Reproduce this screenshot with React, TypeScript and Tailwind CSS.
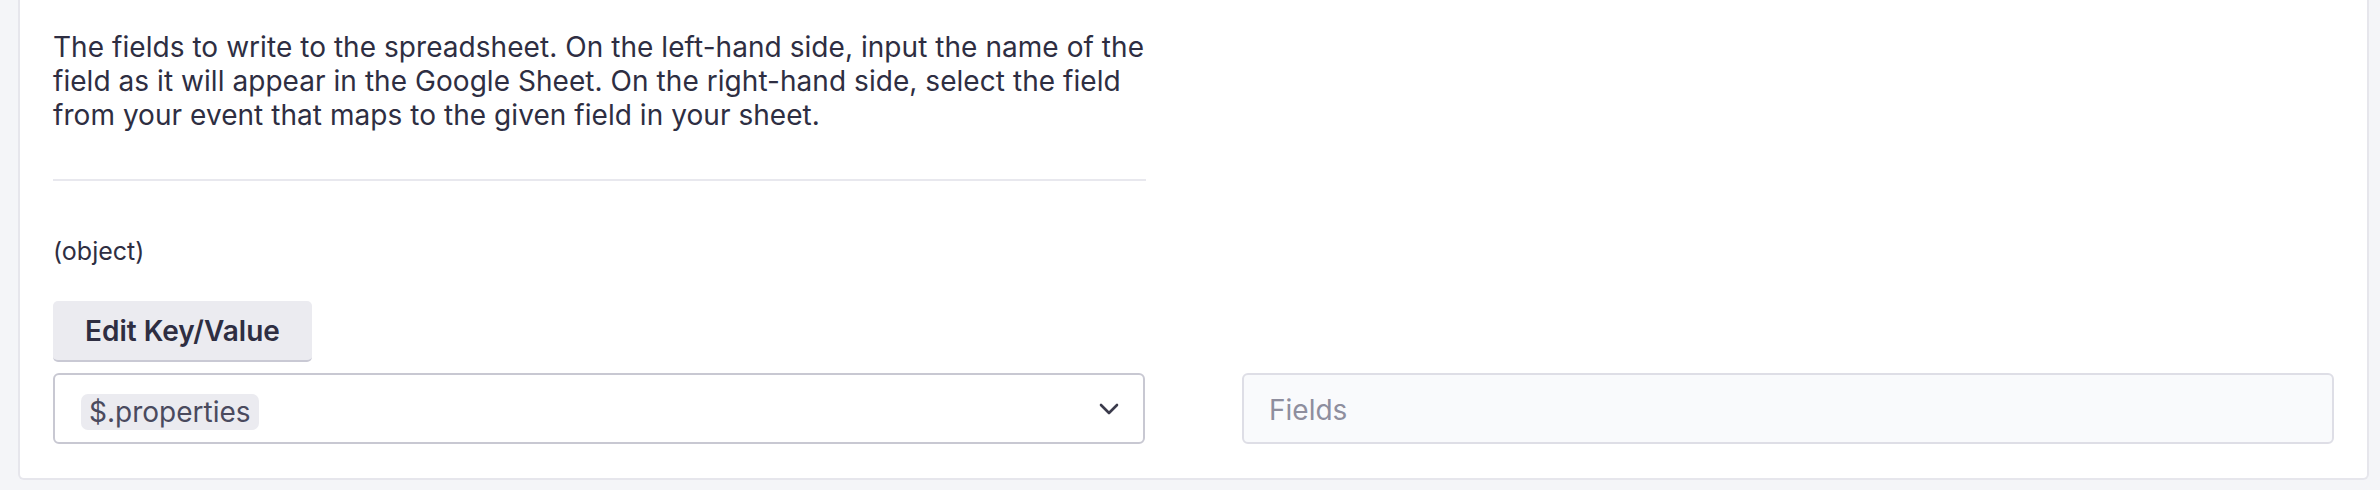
import React from 'react';

const font = { fontFamily: 'Inter, "Noto Sans", sans-serif' };

const Chevron = () => (
  <svg width="20" height="12" viewBox="0 0 20 12" fill="none">
    <path d="M2 2l8 8 8-8" stroke="#3b3b4c" strokeWidth="2.6" strokeLinecap="round" strokeLinejoin="round" />
  </svg>
);

export default function App() {
  return (
    <div className="min-h-[490px] w-full bg-[#f4f5f8] pl-[18px] pr-[11px]" style={font}>
      <div className="rounded-b-[6px] border-x-2 border-b-2 border-[#e6e6ec] bg-white px-[33px] pb-[34px] pt-[30px]">
        <p className="max-w-[1110px] text-[28px] leading-[34px] tracking-[0.05px] text-[#2e2e42]">
          The fields to write to the spreadsheet. On the left-hand side, input the name of the field as it will appear in the Google Sheet. On the right-hand side, select the field from your event that maps to the given field in your sheet.
        </p>
        <div className="mt-[47px] h-[2px] w-[1093px] bg-[#e8e8ee]" />
        <div className="mt-[54px] text-[25px] leading-[32px] text-[#2e2e42]">(object)</div>
        <button className="mt-[34px] flex h-[61px] items-center rounded-[5px] border-b-2 border-[#c9c9d4] bg-[#ebebf0] px-[32px] text-[28px] font-semibold text-[#2e2e42]">
          Edit Key/Value
        </button>
        <div className="mt-[11px] grid grid-cols-2 gap-[97px]">
          <div className="flex h-[71px] items-center justify-between rounded-[6px] border-2 border-[#c8c8d2] bg-white pl-[26px] pr-[24px]">
            <span className="mt-[6px] rounded-[7px] bg-[#ebebf0] px-[8px] text-[28px] leading-[36px] text-[#4a4a5e]">$.properties</span>
            <Chevron />
          </div>
          <div className="flex h-[71px] items-center rounded-[6px] border-2 border-[#dedee6] bg-[#f9fafc] pl-[25px] pt-[2px] text-[28px] text-[#8e8e9e]">
            Fields
          </div>
        </div>
      </div>
    </div>
  );
}
